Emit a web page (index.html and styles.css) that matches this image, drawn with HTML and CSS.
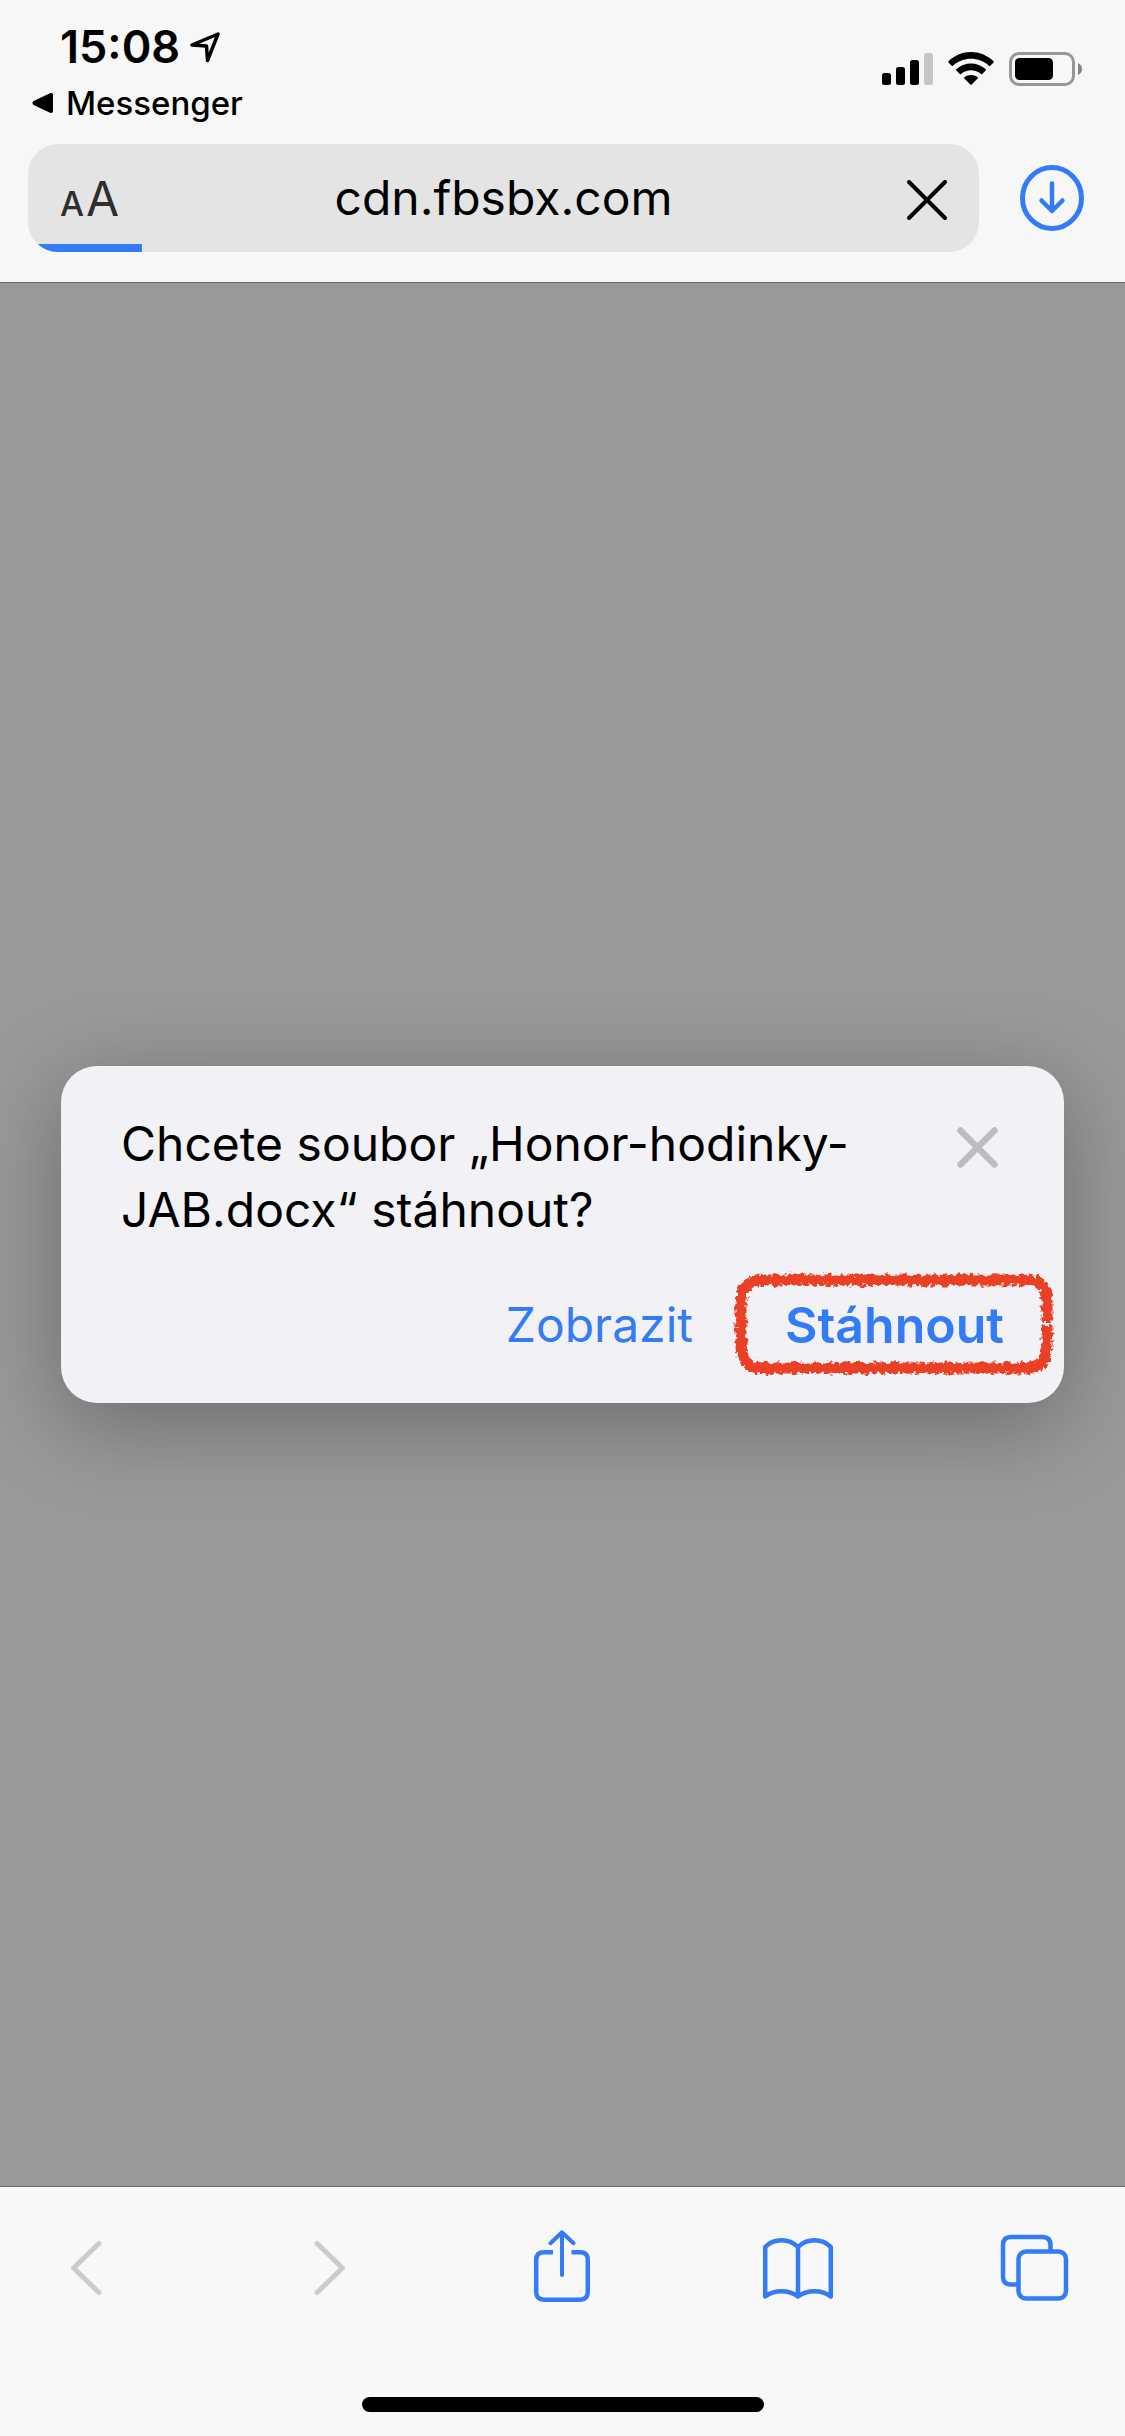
FILE: index.html
```html
<!DOCTYPE html>
<html lang="cs">
<head>
    <meta charset="UTF-8">
    <meta name="viewport" content="width=device-width, initial-scale=1.0">
    <title>cdn.fbsbx.com</title>
    <link rel="stylesheet" href="styles.css">
</head>
<body>
    <header class="header">
        <div class="status-bar">
            <div class="status-left">
                <div class="clock">
                    <span>15:08</span>
                    <svg width="30" height="31" viewBox="0 0 30 31" fill="none" stroke="#000" stroke-width="3.500" stroke-linejoin="round">
                        <path d="M2 13L28 2L17.500 28.500L16.500 14Z"/>
                    </svg>
                </div>
                <a class="back-link" href="#">
                    <svg width="22" height="22" viewBox="0 0 22 22">
                        <path d="M2 10L19 2Q20 2 20 3V19Q20 20 19 20L2 12Q1 11 2 10Z" fill="#000" stroke="#000" stroke-width="2" stroke-linejoin="round"/>
                    </svg>
                    <span>Messenger</span>
                </a>
            </div>
            <div class="status-right">
                <!-- Signal -->
                <svg width="51" height="34" viewBox="0 0 51 34">
                    <rect x="0" y="21" width="9" height="12" rx="2.500"/>
                    <rect x="14" y="15" width="9" height="18" rx="2.500"/>
                    <rect x="28" y="8" width="9" height="25" rx="2.500"/>
                    <rect x="42" y="1" width="9" height="32" rx="2.500" fill="#c6c6c6"/>
                </svg>
                <!-- Wi-Fi -->
                <svg width="46" height="34" viewBox="0 0 46 34">
                    <path d="M0.500 9.300C13 -3.100 33 -3.100 45.500 9.300Q46 10 45.500 10.600L42.300 13.700Q41.600 14.300 41 13.700C31 4.400 15 4.400 5 13.700Q4.400 14.300 3.700 13.700L0.500 10.600Q0 10 0.500 9.300Z"/>
                    <path d="M8.300 17.200C16.500 9.600 29.500 9.600 37.700 17.200Q38.300 17.900 37.700 18.500L34.200 21.900Q33.600 22.400 33 21.900C27.300 17 18.700 17 13 21.900Q12.400 22.400 11.800 21.900L8.300 18.500Q7.700 17.900 8.300 17.200Z"/>
                    <path d="M16.400 25.200C20 22.200 26 22.200 29.600 25.200Q30.200 25.900 29.600 26.500L23.700 32.400Q23 33 22.300 32.400L16.400 26.500Q15.800 25.900 16.400 25.200Z"/>
                </svg>
                <!-- Battery -->
                <svg width="73" height="34" viewBox="0 0 73 34">
                    <rect x="1.500" y="1.500" width="63" height="31" rx="8.500" fill="none" stroke="#979797" stroke-width="3"/>
                    <rect x="6" y="6" width="38" height="22" rx="4.500"/>
                    <path d="M69 11Q73 13 73 17T69 23Z" fill="#848484"/>
                </svg>
            </div>
        </div>
        <div class="nav">
            <div class="address-bar">
                <button class="text-size" type="button" aria-label="Velikost textu"><span class="small-a">A</span><span class="big-a">A</span></button>
                <input class="address" type="text" value="cdn.fbsbx.com" aria-label="Adresa">
                <button class="stop" type="button" aria-label="Zastavit">
                    <svg width="40" height="40" viewBox="0 0 40 40" fill="none" stroke="#000" stroke-width="4" stroke-linecap="round">
                        <path d="M2 2L38 38M38 2L2 38"/>
                    </svg>
                </button>
                <div class="progress"></div>
            </div>
            <button type="button" aria-label="Stahování">
                <svg width="64" height="66" viewBox="0 0 64 66" fill="none" stroke="#347bf7" stroke-width="5" stroke-linecap="round" stroke-linejoin="round">
                    <ellipse cx="32" cy="33" rx="29.500" ry="30.500"/>
                    <path d="M32 18.500V46M21.500 35.500L32 46L42.500 35.500" stroke-width="4.500"/>
                </svg>
            </button>
        </div>
    </header>

    <main class="page">
        <div class="dialog" role="dialog" aria-labelledby="question">
            <div class="dialog-top">
                <p class="question" id="question">Chcete soubor „Honor-hodinky-JAB.docx“ stáhnout?</p>
                <button class="close" type="button" aria-label="Zavřít">
                    <svg width="41" height="41" viewBox="0 0 41 41" fill="none" stroke="#bdbcc2" stroke-width="6.500" stroke-linecap="round">
                        <path d="M3.500 3.500L37.500 37.500M37.500 3.500L3.500 37.500"/>
                    </svg>
                </button>
            </div>
            <div class="dialog-actions">
                <button class="action" type="button">Zobrazit</button>
                <button class="action primary" type="button">Stáhnout
                    <!-- Crayon outline -->
                    <svg class="marker" width="330" height="112" viewBox="0 0 330 112" fill="none" stroke="#ea4025">
                        <defs>
                            <filter id="crayon" x="0" y="0" width="330" height="112" filterUnits="userSpaceOnUse">
                                <feTurbulence type="fractalNoise" baseFrequency="0.25" numOctaves="2" seed="4" result="noise"/>
                                <feDisplacementMap in="SourceGraphic" in2="noise" scale="9" xChannelSelector="R" yChannelSelector="G"/>
                            </filter>
                        </defs>
                        <path filter="url(#crayon)" stroke-width="11" d="M318 53V32Q318 11 296 11H34Q12 11 12 34V77Q12 99 34 99H296Q318 99 318 77V57"/>
                    </svg>
                </button>
            </div>
        </div>
    </main>

    <footer class="footer">
        <nav class="toolbar">
            <button type="button" aria-label="Zpět" disabled>
                <svg width="72" height="72" viewBox="0 0 72 72" fill="none" stroke="#cbcbcb" stroke-width="5" stroke-linecap="round" stroke-linejoin="round">
                    <path d="M48 13.500L22.500 38L48 62.500"/>
                </svg>
            </button>
            <button type="button" aria-label="Vpřed" disabled>
                <svg width="72" height="72" viewBox="0 0 72 72" fill="none" stroke="#cbcbcb" stroke-width="5" stroke-linecap="round" stroke-linejoin="round">
                    <path d="M29 13.500L54.500 38L29 62.500"/>
                </svg>
            </button>
            <button type="button" aria-label="Sdílet">
                <svg width="72" height="72" viewBox="0 0 72 72" fill="none" stroke="#347bf7" stroke-width="4.500">
                    <path d="M28 22.300H19Q11.200 22.300 11.200 30V62Q11.200 69.700 19 69.700H55Q62.800 69.700 62.800 62V30Q62.800 22.300 55 22.300H46.500"/>
                    <path d="M37 45V2.500M25.500 13.200L37 2.300L48.500 13.200" stroke-width="4" stroke-linecap="round" stroke-linejoin="round"/>
                </svg>
            </button>
            <button type="button" aria-label="Záložky">
                <svg width="72" height="72" viewBox="0 0 72 72" fill="none" stroke="#347bf7" stroke-width="4.500" stroke-linecap="round" stroke-linejoin="round">
                    <path d="M36 17C27 8 12 8 3.200 17V66.500C12 59.500 27 59.500 36 66.500C45 59.500 60 59.500 68.800 66.500V17C60 8 45 8 36 17V66.500"/>
                </svg>
            </button>
            <button type="button" aria-label="Panely">
                <svg width="72" height="72" viewBox="0 0 72 72" fill="none" stroke="#347bf7" stroke-width="4.500">
                    <path d="M19 54.500H12Q4 54.500 4 47V15Q4 7 12 7H43Q51.500 7 51.500 15V21"/>
                    <rect x="19.500" y="21.500" width="47.500" height="47" rx="7.500"/>
                </svg>
            </button>
        </nav>
        <div class="home-indicator"></div>
    </footer>
</body>
</html>
```
FILE: styles.css
```css
* {
    box-sizing: border-box;
}
body {
    font-family: Inter, "Liberation Sans", sans-serif;
    background-color: #999999;
    color: black;
    display: flex;
    flex-direction: column;
    min-height: 100vh;
    margin: 0;
}
button {
    display: flex;
    padding: 0;
    border: none;
    background: none;
    font-family: inherit;
    cursor: pointer;
}
svg {
    display: block;
    flex-shrink: 0;
}

/* Header */
.header {
    background-color: #f7f7f7;
    border-bottom: 1px solid #6b6b6b;
    padding-bottom: 30px;
}
.status-bar {
    display: flex;
    justify-content: space-between;
    height: 144px;
    padding: 20px 43px 0 32px;
}
.clock {
    display: flex;
    align-items: center;
    gap: 10px;
    padding-left: 28px;
    font-size: 45px;
    font-weight: 600;
    line-height: 54px;
}
.back-link {
    display: flex;
    align-items: center;
    gap: 12px;
    margin-top: 8px;
    color: black;
    font-size: 33px;
    font-weight: 500;
    line-height: 42px;
    text-decoration: none;
}
.status-right {
    display: flex;
    align-items: flex-start;
    gap: 15px;
    padding-top: 32px;
}
.nav {
    display: flex;
    align-items: center;
    gap: 41px;
    padding: 0 41px 0 28px;
}
.address-bar {
    position: relative;
    flex: 1;
    display: flex;
    align-items: center;
    height: 108px;
    padding: 0 32px;
    border-radius: 30px;
    background-color: #e4e4e4;
    overflow: hidden;
}
.text-size {
    width: 64px;
    align-items: baseline;
    gap: 2px;
    padding-top: 6px;
    color: #2e2e2e;
    line-height: 60px;
}
.small-a {
    font-size: 34px;
    font-weight: 500;
}
.big-a {
    font-size: 48px;
}
.address {
    flex: 1;
    min-width: 0;
    padding: 0;
    border: none;
    background: none;
    color: black;
    font-family: inherit;
    font-size: 48px;
    line-height: 60px;
    text-align: center;
}
.stop {
    width: 64px;
    justify-content: flex-end;
    padding-top: 4px;
}
.progress {
    position: absolute;
    left: 0;
    bottom: 0;
    width: 12%;
    height: 8px;
    background-color: #347bf7;
}

/* Page and download dialog */
.page {
    flex: 1;
    display: flex;
    align-items: center;
    padding: 0 61px;
}
.dialog {
    flex: 1;
    padding: 45px 60px;
    border-radius: 36px;
    background-color: #f1f1f6;
    box-shadow: 0 20px 90px rgba(0, 0, 0, 0.3);
}
.dialog-top {
    display: flex;
    align-items: flex-start;
    justify-content: space-between;
    gap: 60px;
}
.question {
    margin: 0;
    font-size: 48px;
    line-height: 66px;
}
.close {
    margin: 16px 6px 0 0;
}
.dialog-actions {
    display: flex;
    justify-content: flex-end;
    gap: 92px;
    margin-top: 49px;
}
.action {
    color: #347bf7;
    font-size: 48px;
    line-height: 66px;
}
.primary {
    position: relative;
    font-size: 50px;
    font-weight: 600;
}
.marker {
    position: absolute;
    top: 50%;
    left: 50%;
    transform: translate(-50%, -50%);
}

/* Bottom toolbar */
.footer {
    padding-bottom: 24px;
    border-top: 1px solid #6b6b6b;
    background-color: #f8f8f8;
}
.toolbar {
    display: flex;
    justify-content: space-between;
    padding: 43px 54px 95px 51px;
}
.home-indicator {
    width: 402px;
    height: 15px;
    margin: 0 auto;
    border-radius: 8px;
    background-color: black;
}
```
